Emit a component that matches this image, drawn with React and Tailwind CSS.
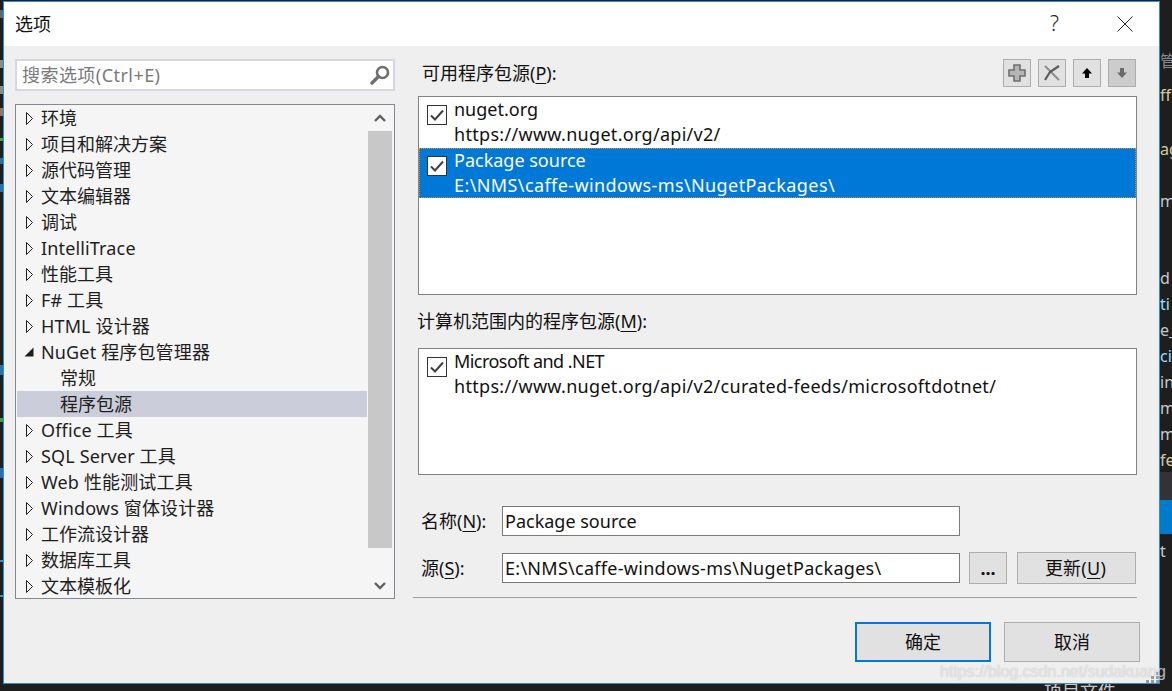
import React from "react";

const FONT = { fontFamily: '"Noto Sans","Noto Sans CJK SC",sans-serif' };

const Arrow = ({ open }) =>
  open ? (
    <svg width="10" height="12" viewBox="0 0 10 12" className="shrink-0">
      <path d="M0.5 10.5 L9.5 10.5 L9.5 1.5 Z" fill="#1e1e1e" />
    </svg>
  ) : (
    <svg width="10" height="15" viewBox="0 0 10 15" className="shrink-0">
      <path d="M2.5 1.5 L8.5 7.5 L2.5 13.5 Z" fill="none" stroke="#1e1e1e" strokeWidth="1" />
    </svg>
  );

const tree = [
  ["环境"],
  ["项目和解决方案"],
  ["源代码管理"],
  ["文本编辑器"],
  ["调试"],
  ["IntelliTrace"],
  ["性能工具"],
  ["F# 工具"],
  ["HTML 设计器"],
  ["NuGet 程序包管理器", "open"],
  ["常规", "child"],
  ["程序包源", "sel"],
  ["Office 工具"],
  ["SQL Server 工具"],
  ["Web 性能测试工具"],
  ["Windows 窗体设计器"],
  ["工作流设计器"],
  ["数据库工具"],
  ["文本模板化"],
];

const Check = () => (
  <span className="w-[20px] h-[20px] border border-[#333333] bg-white flex items-center justify-center shrink-0">
    <svg width="16" height="14" viewBox="0 0 16 14">
      <path d="M2 7.5 L6 11.5 L14 2.5" fill="none" stroke="#404040" strokeWidth="2" />
    </svg>
  </span>
);

const SourceRow = ({ name, url, selected, first, nameCls = "", urlCls = "tracking-[0.3px]" }) => (
  <div
    className={
      "flex pl-[8px] " +
      (first ? "h-[51px] " : "h-[50px] ") +
      (selected ? "bg-[#0078d7] text-white outline-1 outline-dotted outline-offset-[-1px] outline-[#e08a2c]" : "text-[#111111]")
    }
  >
    <span className="mt-[8px]"><Check /></span>
    <div className="ml-[7px] leading-[25px] whitespace-nowrap">
      <div className={nameCls}>{name}</div>
      <div className={urlCls}>{url}</div>
    </div>
  </div>
);

const ToolBtn = ({ bg = "bg-[#e1e1e1]", children }) => (
  <div className={"w-[28px] h-[28px] border border-[#adadad] flex items-center justify-center " + bg}>{children}</div>
);

const Btn = ({ className, children }) => (
  <div className={"bg-[#e1e1e1] flex items-center justify-center shrink-0 text-[#111111] " + className}>{children}</div>
);

const U = ({ children }) => <span className="underline underline-offset-[3px] decoration-1">{children}</span>;

const edgeRight = [
  ["管", 50, "#8a8a8a"], ["ff", 84, "#d8c8a0"], ["ag", 138, "#d8c8a0"], ["m", 190, "#c8c8c8"], ["d", 267, "#c8c8c8"], ["ti", 293, "#9cdcfe"], ["e_", 319, "#c8c8c8"], ["ci", 345, "#9cdcfe"], ["in", 371, "#c8c8c8"], ["m", 397, "#c8c8c8"], ["m", 423, "#c8c8c8"], ["fe", 449, "#d8c8a0"], ["t", 540, "#c8c8c8"],
];

const edgeLeft = [
  [10, 8, "#5a6a7a"], [60, 8, "#8a8a8a"], [86, 8, "#8a8a8a"], [108, 8, "#8a7a60"], [138, 3, "#3f9f3f"], [158, 6, "#2a6fa8"], [184, 8, "#2a6fa8"], [365, 10, "#2a6fa8"], [418, 4, "#3f9f3f"], [468, 10, "#2a6fa8"], [560, 2, "#2e8fd8"], [595, 2, "#2e8fd8"],
];

export default function App() {
  return (
    <div className="relative w-[1172px] h-[691px] overflow-hidden bg-[#1e1e1e] text-[18px]" style={FONT}>
      {edgeLeft.map(([y, h, c]) => (
        <div key={y} className="absolute left-0 w-[3px]" style={{ top: y, height: h, backgroundColor: c }} />
      ))}
      {edgeRight.map(([t, y, c]) => (
        <span key={y} className="absolute left-[1160px] w-[12px] overflow-hidden whitespace-nowrap text-[16px] leading-[22px]" style={{ top: y, color: c }}>{t}</span>
      ))}
      <div className="absolute left-[1160px] top-[472px] w-[12px] h-[28px] bg-[#333337]" />
      <div className="absolute left-[1160px] top-[500px] w-[12px] h-[34px] bg-[#007acc]" />
      <span className="absolute left-[1044px] top-[680px] text-[#c8c8c8] leading-[22px]">项目文件</span>

      <div className="relative ml-[3px] mt-[1px] w-[1157px] h-[683px] border border-[#2e8fd8] bg-[#efefef] flex flex-col">
        <div className="h-[44px] bg-white flex items-center pl-[11px] shrink-0">
          <span className="text-[#111111] text-[18px]">选项</span>
          <span className="ml-auto mr-[58px] text-[#222222] text-[21px] font-light">?</span>
          <svg width="16" height="16" viewBox="0 0 16 16" className="mr-[26px]">
            <path d="M0.5 0.5 L15.5 15.5 M15.5 0.5 L0.5 15.5" stroke="#222222" strokeWidth="1" />
          </svg>
        </div>

        <div className="flex-1 flex pl-[11px]">
          <div className="w-[380px] pt-[13px] shrink-0">
            <div className="h-[32px] border-2 border-[#d6d6e6] bg-white flex items-center pl-[5px] pr-[3px] text-[#7a7a7a]">
              <span className="tracking-[0.45px]">搜索选项(Ctrl+E)</span>
              <svg width="20" height="20" viewBox="0 0 20 20" className="ml-auto">
                <circle cx="12.5" cy="7.5" r="5.5" fill="none" stroke="#6e6e6e" strokeWidth="2.6" />
                <path d="M8.5 11.5 L2 18" stroke="#6e6e6e" strokeWidth="3.4" strokeLinecap="round" />
              </svg>
            </div>
            <div className="mt-[13px] h-[495px] border border-[#828790] bg-[#f5f5f5] flex pl-[1px] overflow-hidden">
              <div className="w-[350px] text-[#1e1e1e]">
                {tree.map(([label, kind]) => (
                  <div
                    key={label}
                    className={"h-[26px] flex items-center leading-[26px] whitespace-nowrap " + (kind === "sel" ? "bg-[#cbcdda]" : "")}
                  >
                    {kind === "child" || kind === "sel" ? (
                      <span className="pl-[43px]">{label}</span>
                    ) : (
                      <>
                        <span className="w-[24px] pl-[7px] flex justify-start"><Arrow open={kind === "open"} /></span>
                        <span className={/[A-Za-z]/.test(label) ? "tracking-[0.15px]" : ""}>{label}</span>
                      </>
                    )}
                  </div>
                ))}
              </div>
              <div className="ml-[1px] w-[24px] flex flex-col">
                <div className="h-[26px] flex items-center justify-center">
                  <svg width="12" height="8" viewBox="0 0 12 8"><path d="M1 7 L6 2 L11 7" fill="none" stroke="#606060" strokeWidth="2.4" /></svg>
                </div>
                <div className="h-[417px] bg-[#c8c8c8]" />
                <div className="flex-1 flex items-end justify-center pb-[8px]">
                  <svg width="12" height="8" viewBox="0 0 12 8"><path d="M1 1 L6 6 L11 1" fill="none" stroke="#606060" strokeWidth="2.4" /></svg>
                </div>
              </div>
            </div>
          </div>

          <div className="ml-[18px] w-[724px] text-[#111111]">
            <div className="flex items-center mt-[12px] h-[30px] pl-[9px]">
              <span>可用程序包源(<U>P</U>):</span>
              <div className="ml-auto mr-[1px] flex gap-[7px]">
                <ToolBtn>
                  <svg width="20" height="20" viewBox="0 0 20 20">
                    <path d="M7 2 H13 V7 H18 V13 H13 V18 H7 V13 H2 V7 H7 Z" fill="#b5b5b5" stroke="#6e6e6e" strokeWidth="1.6" />
                  </svg>
                </ToolBtn>
                <ToolBtn>
                  <svg width="20" height="20" viewBox="0 0 20 20">
                    <path d="M3 3 L17 17" stroke="#8c8c8c" strokeWidth="2" />
                    <path d="M17 3 L8 9 L3 17" fill="none" stroke="#5a5a5a" strokeWidth="2.2" />
                  </svg>
                </ToolBtn>
                <ToolBtn>
                  <svg width="12" height="12" viewBox="0 0 12 12"><path d="M6 1 L11 6.5 H8 V11 H4 V6.5 H1 Z" fill="#000000" /></svg>
                </ToolBtn>
                <ToolBtn bg="bg-[#cccccc]">
                  <svg width="12" height="12" viewBox="0 0 12 12"><path d="M6 11 L11 5.5 H8 V1 H4 V5.5 H1 Z" fill="#6a6a6a" /></svg>
                </ToolBtn>
              </div>
            </div>
            <div className="mt-[8px] ml-[5px] w-[719px] h-[199px] border border-[#828282] bg-white">
              <SourceRow first name="nuget.org" url="https://www.nuget.org/api/v2/" />
              <SourceRow selected name="Package source" url="E:\NMS\caffe-windows-ms\NugetPackages\" urlCls="tracking-[0.4px]" />
            </div>
            <div className="mt-[13px] h-[26px] pl-[4px] leading-[26px]">计算机范围内的程序包源(<U>M</U>):</div>
            <div className="mt-[14px] ml-[5px] w-[719px] h-[127px] border border-[#828282] bg-white">
              <SourceRow name="Microsoft and .NET" nameCls="tracking-[-0.55px]" url="https://www.nuget.org/api/v2/curated-feeds/microsoftdotnet/" />
            </div>
            <div className="mt-[31px] h-[30px] flex items-center pl-[8px]">
              <span className="w-[81px]">名称(<U>N</U>):</span>
              <div className="w-[458px] h-[30px] border border-[#7a7a7a] bg-white pl-[2px] leading-[28px]">Package source</div>
            </div>
            <div className="mt-[16px] h-[32px] flex items-center pl-[8px]">
              <span className="w-[81px]">源(<U>S</U>):</span>
              <div className="w-[458px] h-[30px] border border-[#7a7a7a] bg-white pl-[2px] leading-[28px] whitespace-nowrap tracking-[0.28px]">E:\NMS\caffe-windows-ms\NugetPackages\</div>
              <Btn className="ml-[9px] w-[38px] h-[32px] border border-[#adadad] font-bold">...</Btn>
              <Btn className="ml-[10px] w-[119px] h-[32px] border border-[#adadad]"><span className="tracking-[0.25px] pr-[2px]">更新(<U>U</U>)</span></Btn>
            </div>
            <div className="mt-[13px] w-[724px] h-px bg-[#a0a0a0]" />
            <div className="mt-[24px] flex">
              <Btn className="ml-[442px] w-[136px] h-[40px] border-2 border-[#0078d7]">确定</Btn>
              <Btn className="ml-[13px] w-[136px] h-[40px] border border-[#adadad]">取消</Btn>
            </div>
          </div>
        </div>
      </div>

      <svg width="14" height="12" viewBox="0 0 14 12" className="absolute left-[1146px] top-[672px]">
        <g fill="#9a9a9a">
          <rect x="10" y="0" width="3" height="3" />
          <rect x="5" y="4" width="3" height="3" /><rect x="10" y="4" width="3" height="3" />
          <rect x="0" y="8" width="3" height="3" /><rect x="5" y="8" width="3" height="3" /><rect x="10" y="8" width="3" height="3" />
        </g>
      </svg>
      <span className="absolute left-[940px] top-[661px] text-[16px] leading-[22px] text-white/60 whitespace-nowrap" style={{ fontFamily: '"Liberation Sans",sans-serif', textShadow: "0 0 1px rgba(120,120,120,0.5)" }}>https://blog.csdn.net/sudakuang</span>
    </div>
  );
}
